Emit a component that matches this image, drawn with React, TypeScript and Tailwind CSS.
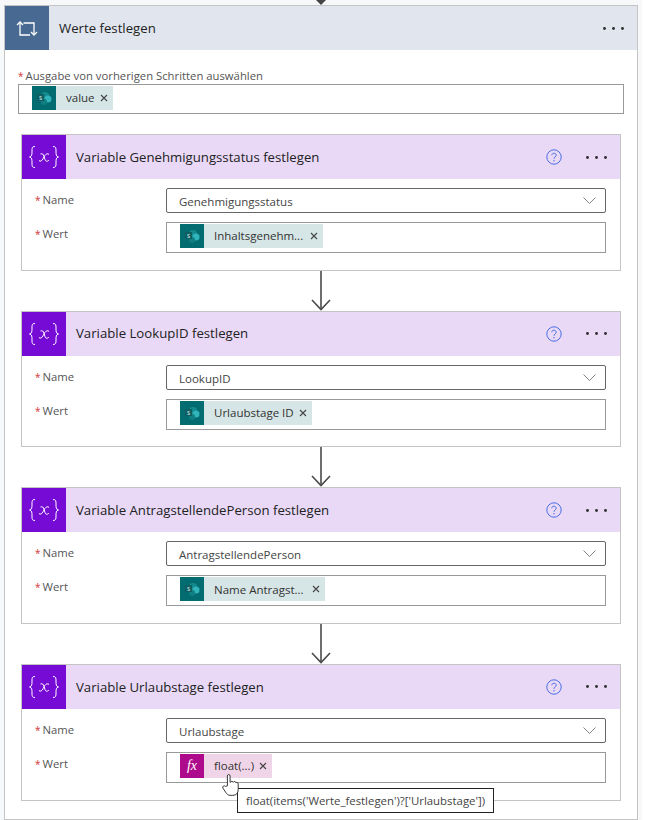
import React from "react";

const FONT = "font-['Open_Sans','Noto_Sans',sans-serif]";

function LoopIcon() {
  return (
    <svg width="22" height="15" viewBox="0 0 22 15" fill="none" stroke="white" strokeWidth="1.3">
      <path d="M4 1V14H14" />
      <path d="M1 4L4 1L7 4" />
      <path d="M7.5 2H18V14" />
      <path d="M15 11L18 14L21 11" />
    </svg>
  );
}

function VariableIcon() {
  return (
    <svg width="30" height="22" viewBox="0 0 30 22" fill="none" stroke="white" strokeWidth="1">
      <path d="M6 0.5C3 0.5 3 2 3 5C3 8.5 3 10.5 0.5 11C3 11.5 3 13.5 3 17C3 20 3 21.5 6 21.5" />
      <path d="M24 0.5C27 0.5 27 2 27 5C27 8.5 27 10.5 29.5 11C27 11.5 27 13.5 27 17C27 20 27 21.5 24 21.5" />
      <path d="M11.5 8C13.5 7.3 14.3 8 15 10.5L16 13.5C16.7 15.5 18 15.8 19.8 14.3" />
      <path d="M20 8.4C18.5 7.2 17 8 15.8 9.5L14 12.8C13 14.8 11.5 15.8 10 14.6" />
    </svg>
  );
}

function SharePointIcon() {
  return (
    <svg width="24" height="24" viewBox="0 0 24 24">
      <circle cx="13" cy="10" r="4" fill="#148a8f" />
      <circle cx="16" cy="13" r="3.5" fill="#2fb4ba" />
      <circle cx="12" cy="16" r="3" fill="#0f7f84" />
      <rect x="5" y="8" width="7" height="7" fill="#0d5f62" />
      <text x="8.5" y="13.5" fontSize="6.5" fill="#d5eeee" textAnchor="middle" fontFamily="Open Sans">s</text>
    </svg>
  );
}

function Dots() {
  return (
    <svg width="21" height="3" viewBox="0 0 21 3" fill="#2b2b2b">
      <circle cx="1.5" cy="1.5" r="1.4" />
      <circle cx="10.5" cy="1.5" r="1.4" />
      <circle cx="19.5" cy="1.5" r="1.4" />
    </svg>
  );
}

function HelpIcon() {
  return (
    <svg width="16" height="16" viewBox="0 0 16 16" fill="none">
      <circle cx="8" cy="8" r="7.2" stroke="#4a6fe3" strokeWidth="1" />
      <path d="M5.8 6.2C5.8 3.6 10.2 3.6 10.2 6.2C10.2 8 8 7.8 8 9.8" stroke="#4a6fe3" strokeWidth="1" />
      <circle cx="8" cy="11.8" r="0.7" fill="#4a6fe3" />
    </svg>
  );
}

function Chevron() {
  return (
    <svg width="13" height="7" viewBox="0 0 13 7" fill="none" stroke="#777" strokeWidth="0.9">
      <path d="M0.5 0.5L6.5 6.5L12.5 0.5" />
    </svg>
  );
}

function Close() {
  return (
    <svg width="8" height="8" viewBox="0 0 8 8" fill="none" stroke="#444" strokeWidth="1.1">
      <path d="M1 1L7 7M7 1L1 7" />
    </svg>
  );
}

function Chip({ label, width }: { label: string; width: string }) {
  return (
    <div className={`flex items-center h-6 bg-[#d6e6e6] ${width}`}>
      <div className="w-6 h-6 bg-[#036c70] shrink-0">
        <SharePointIcon />
      </div>
      <span className="ml-[10px] text-[11.5px] text-[#333] truncate">{label}</span>
      <span className="ml-auto mr-[5px] flex">
        <Close />
      </span>
    </div>
  );
}

function Arrow() {
  return (
    <div className="h-10 flex justify-center">
      <svg width="20" height="40" viewBox="0 0 20 40" fill="none" stroke="#4a4a4a" strokeWidth="1.6">
        <path d="M10 0V38" />
        <path d="M1 29L10 38.5L19 29" />
      </svg>
    </div>
  );
}

function Required() {
  return <span className="text-[10px] text-[#d13438] mr-[2px]">*</span>;
}

type StepProps = {
  title: string;
  name: string;
  chip: React.ReactNode;
};

function Step({ title, name, chip }: StepProps) {
  return (
    <div className="h-[136.67px] border border-[#c4c4c4] bg-white">
      <div className="flex items-center h-11 bg-[#e9d9f7]">
        <div className="w-11 h-11 bg-[#770bd6] flex items-center justify-center">
          <VariableIcon />
        </div>
        <div className="ml-[10px] pt-px text-[13.2px] text-[#222]">{title}</div>
        <div className="ml-auto mr-[13px] flex items-center gap-[24px]">
          <HelpIcon />
          <Dots />
        </div>
      </div>
      <div className="px-[14px] pt-[9px]">
        <div className="flex">
          <div className="w-[131px] -ml-px pt-[4px] text-[11.3px] text-[#555] shrink-0">
            <Required />Name
          </div>
          <div className="flex-1 h-[25px] border border-[#666] rounded-[2px] flex items-center pl-3 pr-[9px] text-[11.5px] text-[#444]">
            <span className="pt-[2px]">{name}</span>
            <span className="ml-auto flex">
              <Chevron />
            </span>
          </div>
        </div>
        <div className="flex mt-[9px]">
          <div className="w-[131px] -ml-px pt-[4px] text-[11.3px] text-[#555] shrink-0">
            <Required />Wert
          </div>
          <div className="flex-1 h-[31px] border border-[#999] pl-[13px] pt-[1px]">{chip}</div>
        </div>
      </div>
    </div>
  );
}

export default function App() {
  return (
    <div className={`${FONT} relative h-[820px] overflow-hidden bg-white`}>
      <div className="w-[642px] h-[820px] bg-[#f7f8f9] px-1">
        <div className="h-[5px] flex justify-center pr-px">
          <svg width="10" height="5" viewBox="0 0 10 5">
            <path d="M0 0H10L5 5Z" fill="#444" />
          </svg>
        </div>
        <div className="h-[815px] border border-[#c4c4c4] bg-white">
          <div className="flex items-center h-11 bg-[#e1e6ee]">
            <div className="w-11 h-11 bg-[#486991] flex items-center justify-center">
              <LoopIcon />
            </div>
            <div className="ml-[10px] pt-px text-[13.2px] text-[#222]">Werte festlegen</div>
            <div className="ml-auto mr-[13px] flex">
              <Dots />
            </div>
          </div>
          <div className="px-[13px] pt-[18px]">
            <div className="text-[11.3px] leading-4 text-[#555]">
              <Required />Ausgabe von vorherigen Schritten auswählen
            </div>
            <div className="h-[30px] border border-[#999] pl-[13px] pt-[1px]">
              <Chip label="value" width="w-[81px]" />
            </div>
            <div className="mx-[3px] mt-[20px]">
              <Step title="Variable Genehmigungsstatus festlegen" name="Genehmigungsstatus" chip={<Chip label="Inhaltsgenehm..." width="w-[143px]" />} />
              <Arrow />
              <Step title="Variable LookupID festlegen" name="LookupID" chip={<Chip label="Urlaubstage ID" width="w-[132px]" />} />
              <Arrow />
              <Step title="Variable AntragstellendePerson festlegen" name="AntragstellendePerson" chip={<Chip label="Name Antragst..." width="w-[145px]" />} />
              <Arrow />
              <Step
                title="Variable Urlaubstage festlegen"
                name="Urlaubstage"
                chip={
                  <div className="flex items-center h-6 w-[92px] bg-[#f0d5e8]">
                    <div className="w-6 h-6 bg-[#ae0b8c] shrink-0 flex items-center justify-center">
                      <span className="font-['Liberation_Serif',serif] italic text-[14px] text-white">fx</span>
                    </div>
                    <span className="ml-[10px] text-[11.5px] text-[#333]">float(...)</span>
                    <span className="ml-auto mr-[5px] flex">
                      <Close />
                    </span>
                  </div>
                }
              />
            </div>
          </div>
        </div>
      </div>
      <div className="absolute left-[237px] top-[788px] h-[25px] w-[257px] border border-[#222] bg-white flex items-center justify-center text-[11.4px] text-[#444]">
        float(items('Werte_festlegen')?['Urlaubstage'])
      </div>
      <svg className="absolute left-[222px] top-[773px]" width="18" height="24" viewBox="0 0 20 26" fill="white" stroke="#222" strokeWidth="1">
        <path d="M6 14V3C6 0.8 9 0.8 9 3V10L9.5 10C10 8.5 12 8.5 12.5 10C13 8.7 15 8.7 15.5 10.5C16 9.7 18 10 18 12V18C18 22 16 24.5 12 24.5H9C6.5 24.5 5.5 23 4 21L1 16.5C0 14.5 2.5 13 4 14.5Z" />
      </svg>
    </div>
  );
}
